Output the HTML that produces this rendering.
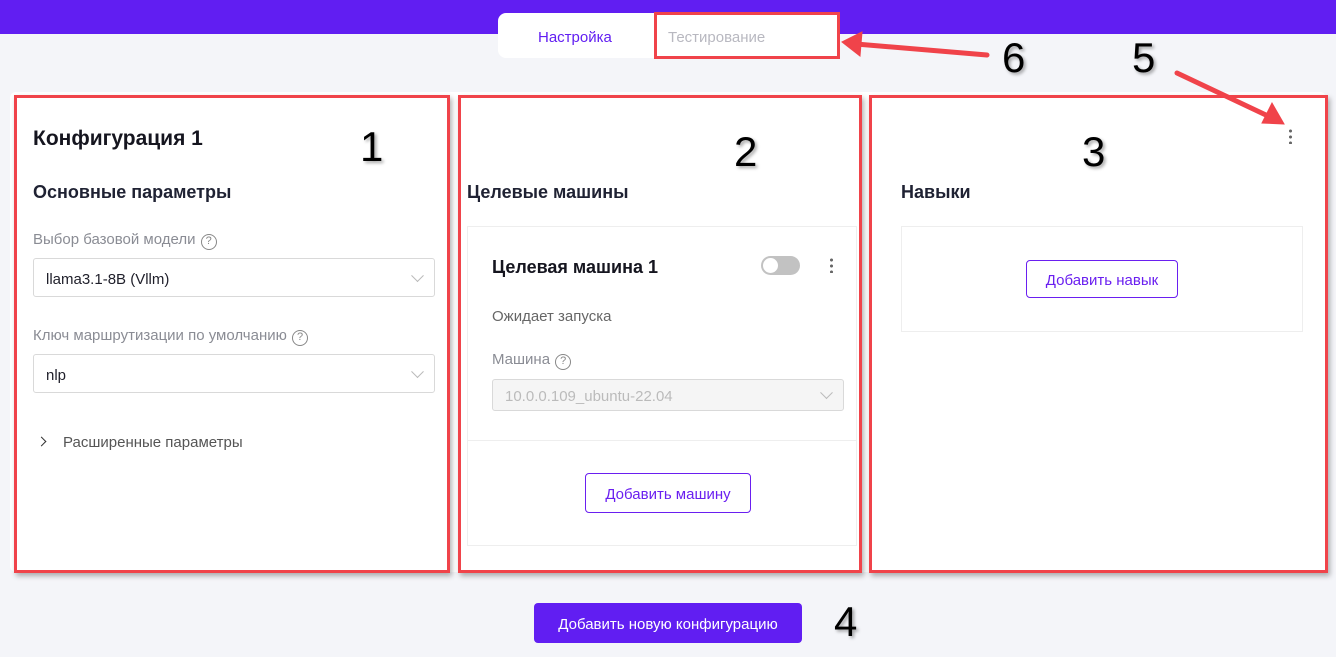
<!DOCTYPE html>
<html><head><meta charset="utf-8"><style>
*{box-sizing:border-box;margin:0;padding:0}
body{width:1336px;height:657px;background:#f4f5f9;font-family:"Liberation Sans","Noto Sans CJK SC",sans-serif;position:relative;overflow:hidden;color:#1f1f2a}
.a{position:absolute}
.red{position:absolute;border:3px solid #f0434a;box-shadow:2px 3px 5px rgba(0,0,0,.3)}
.num{position:absolute;font-size:42px;color:#000;text-shadow:2px 2px 3px rgba(0,0,0,.35);line-height:1}
.lbl{color:#8a8c94;font-size:15px}
.sel{position:absolute;border:1px solid #d9d9d9;border-radius:3px;background:#fff;font-size:15px;padding-left:12px;padding-top:3px;display:flex;align-items:center}
.chev{position:absolute;right:12px;top:50%;width:9px;height:9px;border-right:1px solid #bbb;border-bottom:1px solid #bbb;transform:translateY(-75%) rotate(45deg)}
.q{display:inline-block;width:16px;height:16px;border:1.3px solid #888;border-radius:50%;font-size:11px;text-align:center;line-height:13px;color:#888;vertical-align:0px;margin-left:1px}
.btn{position:absolute;border:1px solid #6a1ff0;border-radius:4px;color:#6a1ff0;font-size:15px;display:flex;align-items:center;justify-content:center;background:#fff;padding-top:2px}
h2{font-size:18px;font-weight:bold;color:#1f2233}
</style></head><body>
<div class="a" style="left:0;top:0;width:1336px;height:34px;background:#611ef2"></div>
<div class="a" style="left:498px;top:13px;width:342px;height:45px;background:#fff;border-radius:8px"></div>
<div class="a" style="left:538px;top:29px;font-size:15px;color:#611ef2">Настройка</div>
<div class="a" style="left:668px;top:29px;font-size:15px;color:#b8b8c0">Тестирование</div>
<div class="red" style="left:654px;top:12px;width:186px;height:47px;box-shadow:none"></div>

<div class="a" style="left:10px;top:92px;width:1316px;height:480px;background:#fff;border-radius:6px"></div>

<!-- panel 1 -->
<div class="a" style="left:33px;top:127px;font-size:21px;font-weight:bold;color:#15151f">Конфигурация 1</div>
<h2 class="a" style="left:33px;top:182px">Основные параметры</h2>
<div class="a lbl" style="left:33px;top:231px">Выбор базовой модели <span class="q">?</span></div>
<div class="sel" style="left:33px;top:258px;width:402px;height:39px">llama3.1-8B (Vllm)<i class="chev"></i></div>
<div class="a lbl" style="left:33px;top:327px">Ключ маршрутизации по умолчанию <span class="q">?</span></div>
<div class="sel" style="left:33px;top:354px;width:402px;height:39px">nlp<i class="chev"></i></div>
<div class="a" style="left:38px;top:438px;width:7px;height:7px;border-right:1.5px solid #333;border-top:1.5px solid #333;transform:rotate(45deg)"></div>
<div class="a" style="left:63px;top:434px;font-size:15px;color:#555">Расширенные параметры</div>

<!-- panel 2 -->
<h2 class="a" style="left:467px;top:182px">Целевые машины</h2>
<div class="a" style="left:467px;top:226px;width:390px;height:320px;border:1px solid #eee"></div>
<div class="a" style="left:467px;top:440px;width:390px;height:1px;background:#eee"></div>
<div class="a" style="left:492px;top:257px;font-size:18px;font-weight:bold;color:#15151f">Целевая машина 1</div>
<div class="a" style="left:761px;top:256px;width:39px;height:19px;border-radius:10px;background:#c2c2c2"></div>
<div class="a" style="left:763px;top:258px;width:15px;height:15px;border-radius:50%;background:#fff"></div>
<div class="a" style="left:830px;top:257px;width:3px;height:16px;background:radial-gradient(circle,#666 1.4px,transparent 1.6px) 0 0/3px 6px"></div>
<div class="a" style="left:492px;top:308px;font-size:15px;color:#666">Ожидает запуска</div>
<div class="a lbl" style="left:492px;top:351px">Машина <span class="q">?</span></div>
<div class="sel" style="left:492px;top:379px;width:352px;height:32px;background:#f5f5f5;color:#bbb">10.0.0.109_ubuntu-22.04<i class="chev"></i></div>
<div class="btn" style="left:585px;top:473px;width:166px;height:40px">Добавить машину</div>

<!-- panel 3 -->
<h2 class="a" style="left:901px;top:182px">Навыки</h2>
<div class="a" style="left:901px;top:226px;width:402px;height:106px;border:1px solid #eee"></div>
<div class="btn" style="left:1026px;top:260px;width:152px;height:38px">Добавить навык</div>
<div class="a" style="left:1289px;top:128px;width:3px;height:16px;background:radial-gradient(circle,#666 1.4px,transparent 1.6px) 0 0/3px 6px"></div>

<div class="a" style="left:534px;top:603px;width:268px;height:40px;background:#611ef2;border-radius:4px;color:#fff;font-size:15px;display:flex;align-items:center;justify-content:center;padding-top:2px">Добавить новую конфигурацию</div>

<div class="red" style="left:14px;top:95px;width:436px;height:478px"></div>
<div class="red" style="left:458px;top:95px;width:404px;height:478px"></div>
<div class="red" style="left:869px;top:95px;width:459px;height:478px"></div>

<div class="num" style="left:360px;top:126px">1</div>
<div class="num" style="left:734px;top:131px">2</div>
<div class="num" style="left:1082px;top:131px">3</div>
<div class="num" style="left:834px;top:601px">4</div>
<div class="num" style="left:1132px;top:37px">5</div>
<div class="num" style="left:1002px;top:37px">6</div>

<svg class="a" style="left:0;top:0" width="1336" height="657">
<g stroke="#f0434a" stroke-width="5" stroke-linecap="round" fill="#f0434a">
<line x1="987" y1="55" x2="856" y2="44"/>
<polygon points="842,42 862,32 860,56" stroke-width="1"/>
<line x1="1177" y1="73" x2="1268" y2="116"/>
<polygon points="1284,124 1262,123 1272,103" stroke-width="1"/>
</g></svg>
</body></html>
